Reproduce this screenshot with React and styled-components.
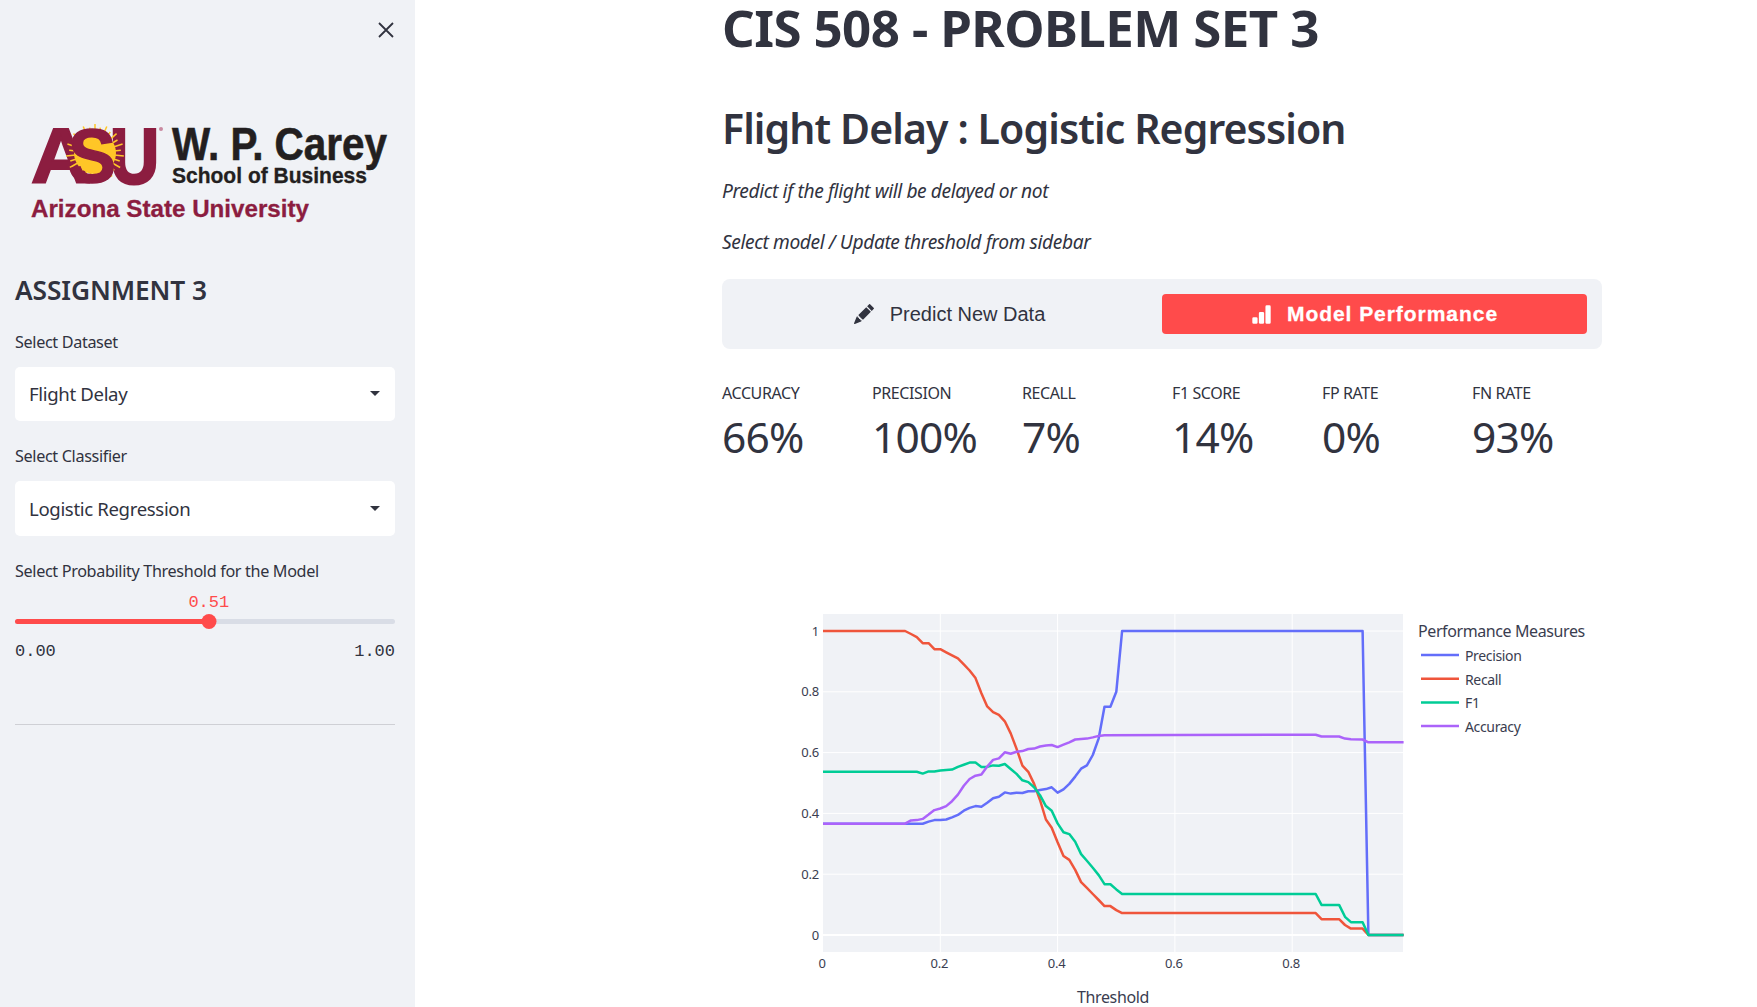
import React from "react";
import styled, { createGlobalStyle } from "styled-components";
import { BsPencilFill, BsBarChartFill } from "react-icons/bs";

const SANS = `"Noto Sans", "Open Sans", sans-serif`;
const INK = "#31333f";

const Global = createGlobalStyle`
  html, body { margin: 0; padding: 0; background: #fff; }
  body { font-family: ${SANS}; color: ${INK}; overflow: hidden; }
`;

const Page = styled.div`display: flex; width: 1757px; height: 1007px; overflow: hidden;`;
const Sidebar = styled.aside`
  position: relative; flex: 0 0 415px; min-width: 0; box-sizing: border-box; height: 1007px;
  padding: 120px 20px 0 15px; background: #f0f2f6;
`;
const CloseBtn = styled.svg`position: absolute; top: 22px; left: 378px; width: 16px; height: 16px;`;
const LogoSvg = styled.svg`display: block; width: 400px; height: 105px; margin-right: -20px;`;
const SideTitle = styled.h2`
  margin: 48px 0 0; font-size: 26.3px; line-height: 34px; font-weight: 600; letter-spacing: -0.1px; color: ${INK};
`;
const FieldLabel = styled.div`
  margin-top: 24.5px; font-size: 16.2px; line-height: 20px; letter-spacing: -0.35px; color: ${INK}; white-space: nowrap;
`;
const SelectBox = styled.div`
  display: flex; align-items: center; justify-content: space-between; box-sizing: border-box;
  margin-top: 15.5px; height: ${p => p.$h}px; padding: 0 15px ${p => p.$lift}px 14px; background: #fff; border-radius: 5px;
  font-size: 18.6px; letter-spacing: -0.35px; color: ${INK};
`;
const Caret = styled.span`
  width: 0; height: 0; border-left: 5px solid transparent; border-right: 5px solid transparent;
  border-top: 5.5px solid ${INK};
`;
const Slider = styled.div`position: relative; margin-top: 38.5px; height: 5px; border-radius: 3px; background: #d9dde6;`;
const SliderFill = styled.div`height: 100%; border-radius: 3px; background: #ff4b4b;`;
const SliderThumb = styled.div`
  position: absolute; top: -5px; width: 15px; height: 15px; border-radius: 50%; background: #ff4b4b; transform: translateX(-50%);
`;
const SliderValue = styled.div`
  position: absolute; top: -26px; transform: translateX(-50%); font: 17px/20px "Liberation Mono", monospace; color: #ff4b4b;
`;
const SliderRange = styled.div`
  display: flex; justify-content: space-between; margin-top: 18px;
  font: 17px/20px "Liberation Mono", monospace; color: ${INK};
`;
const Rule = styled.hr`margin: 62px 0 0; border: 0; height: 1px; background: #cfd0d5;`;

const Main = styled.main`flex: 1; padding-left: 307px;`;
const Column = styled.div`width: 880px;`;
const Title = styled.h1`
  margin: 0; font-size: 51px; line-height: 54px; font-weight: 700; letter-spacing: -0.6px; color: ${INK}; white-space: nowrap;
`;
const SubTitle = styled.h2`
  margin: 49px 0 0; font-size: 41px; line-height: 50px; font-weight: 600; letter-spacing: -0.9px; color: ${INK}; white-space: nowrap;
`;
const Note = styled.p`
  margin: ${p => p.$top}px 0 0; font-size: 19.2px; line-height: 26px; font-style: italic; letter-spacing: -0.4px; color: ${INK};
`;
const Menu = styled.nav`
  display: grid; grid-template-columns: 425px 425px; box-sizing: border-box;
  height: 70px; margin-top: 24px; padding: 15px; border-radius: 8px; background: #f0f2f6;
`;
const MenuItem = styled.div`
  display: flex; align-items: center; justify-content: center; gap: ${p => (p.$active ? 15 : 16)}px;
  border-radius: 4px; font-family: "Liberation Sans", Arial, sans-serif; font-size: ${p => (p.$active ? 21 : 20)}px;
  font-weight: ${p => (p.$active ? 700 : 400)}; color: ${p => (p.$active ? "#fff" : INK)};
  background: ${p => (p.$active ? "#ff4b4b" : "transparent")};
  letter-spacing: ${p => (p.$active ? "0.95px" : "0")};
  -webkit-text-stroke: ${p => (p.$active ? "0.3px #fff" : "0")};
`;
const Metrics = styled.div`display: grid; grid-template-columns: repeat(6, 130px); column-gap: 20px; margin-top: 34px;`;
const Metric = styled.div``;
const MetricLabel = styled.div`font-size: 16px; line-height: 20px; letter-spacing: -0.4px; color: ${INK};`;
const MetricValue = styled.div`margin-top: 9px; font-size: 42.5px; line-height: 50px; letter-spacing: -0.8px; color: ${INK};`;
const ChartSvg = styled.svg`display: block; width: 880px; height: 407px; margin-top: 138px;`;
const Tick = styled.text`font-family: ${SANS}; font-size: 13px; letter-spacing: -0.2px; fill: #3a3d50;`;
const LegendItem = styled.text`font-family: ${SANS}; font-size: 14px; letter-spacing: -0.35px; fill: #3a3d50;`;
const LegendTitle = styled.text`font-family: ${SANS}; font-size: 16px; letter-spacing: -0.4px; fill: #3a3d50;`;
const AxisTitle = styled.text`font-family: ${SANS}; font-size: 16px; letter-spacing: -0.35px; fill: #3a3d50;`;

const PRECISION = [[0,.366],[.17,.366],[.18,.373],[.19,.378],[.2,.378],[.21,.38],[.22,.387],[.23,.395],[.24,.409],[.25,.418],[.26,.424],[.27,.422],[.28,.435],[.29,.45],[.3,.455],[.31,.469],[.32,.465],[.33,.468],[.34,.467],[.35,.473],[.36,.473],[.37,.477],[.38,.48],[.39,.486],[.4,.468],[.41,.479],[.42,.497],[.43,.521],[.44,.547],[.45,.558],[.46,.592],[.47,.647],[.48,.751],[.49,.751],[.5,.8],[.51,1],[.92,1],[.93,0],[.99,0]];
const RECALL = [[0,1],[.14,1],[.15,.99],[.16,.98],[.17,.96],[.18,.96],[.19,.94],[.2,.94],[.21,.93],[.22,.92],[.23,.91],[.24,.89],[.25,.87],[.26,.845],[.27,.795],[.28,.752],[.29,.733],[.3,.724],[.31,.703],[.32,.663],[.33,.613],[.34,.557],[.35,.537],[.36,.497],[.37,.444],[.38,.38],[.39,.353],[.4,.305],[.41,.26],[.42,.247],[.43,.214],[.44,.174],[.45,.155],[.46,.135],[.47,.115],[.48,.095],[.49,.095],[.5,.082],[.51,.072],[.84,.072],[.85,.052],[.88,.052],[.89,.033],[.9,.021],[.92,.021],[.93,0],[.99,0]];
const F1 = [[0,.537],[.16,.537],[.17,.531],[.18,.538],[.19,.538],[.2,.541],[.21,.543],[.22,.544],[.23,.553],[.24,.56],[.25,.567],[.26,.567],[.27,.553],[.28,.553],[.29,.558],[.3,.557],[.31,.5625],[.32,.546],[.33,.53],[.34,.509],[.35,.503],[.36,.486],[.37,.46],[.38,.424],[.39,.409],[.4,.367],[.41,.338],[.42,.332],[.43,.307],[.44,.266],[.45,.244],[.46,.221],[.47,.197],[.48,.167],[.49,.167],[.5,.15],[.51,.135],[.84,.135],[.85,.099],[.88,.099],[.89,.06],[.9,.042],[.92,.042],[.93,0],[.99,0]];
const ACCURACY = [[0,.366],[.14,.366],[.15,.377],[.16,.378],[.17,.382],[.18,.396],[.19,.411],[.2,.416],[.21,.424],[.22,.44],[.23,.462],[.24,.491],[.25,.513],[.26,.524],[.27,.528],[.28,.554],[.29,.576],[.3,.581],[.31,.601],[.32,.596],[.33,.603],[.34,.605],[.35,.612],[.36,.613],[.37,.62],[.38,.623],[.39,.625],[.4,.618],[.41,.626],[.42,.634],[.43,.643],[.44,.645],[.45,.646],[.46,.65],[.47,.655],[.48,.657],[.6,.658],[.84,.659],[.85,.653],[.88,.653],[.89,.646],[.9,.644],[.92,.643],[.93,.634],[.99,.634]];

const X0 = 101, PX = 586.5, Y0 = 335, PY = 304;
const sx = (t) => X0 + PX * t;
const sy = (v) => Y0 - PY * v;
const toPoints = (keys) => keys.map(([t, v]) => `${sx(t).toFixed(1)},${sy(v).toFixed(1)}`).join(" ");

const SERIES = [
  { name: "Precision", color: "#636efa", keys: PRECISION },
  { name: "Recall", color: "#ef553b", keys: RECALL },
  { name: "F1", color: "#00cc96", keys: F1 },
  { name: "Accuracy", color: "#ab63fa", keys: ACCURACY },
];
const METRICS = [["ACCURACY","66%"],["PRECISION","100%"],["RECALL","7%"],["F1 SCORE","14%"],["FP RATE","0%"],["FN RATE","93%"]];

function Chart() {
  return (
    <ChartSvg viewBox="0 0 880 407">
      <rect x="101" y="14" width="580" height="338" fill="#f0f2f6" />
      {[.2,.4,.6,.8].map((t) => <line key={t} x1={sx(t)} x2={sx(t)} y1="14" y2="352" stroke="#fff" strokeWidth="1" />)}
      {[0,.2,.4,.6,.8,1].map((v) => <line key={v} x1="101" x2="681" y1={sy(v)} y2={sy(v)} stroke="#fff" strokeWidth={v === 0 ? 2 : 1} />)}
      {SERIES.map((s) => <polyline key={s.name} points={toPoints(s.keys)} fill="none" stroke={s.color} strokeWidth="2.5" strokeLinejoin="round" />)}
      {[0,.2,.4,.6,.8,1].map((v) => <Tick key={v} x="97" y={sy(v) + 4.5} textAnchor="end">{v}</Tick>)}
      {[0,.2,.4,.6,.8].map((t) => <Tick key={t} x={sx(t) - 1} y="367.5" textAnchor="middle">{t}</Tick>)}
      <AxisTitle x="391" y="403" textAnchor="middle">Threshold</AxisTitle>
      <LegendTitle x="696" y="36.5">Performance Measures</LegendTitle>
      {SERIES.map((s, i) => (
        <g key={s.name}>
          <line x1="699" x2="737" y1={55 + i * 23.7} y2={55 + i * 23.7} stroke={s.color} strokeWidth="2.5" />
          <LegendItem x="743" y={61 + i * 23.7}>{s.name}</LegendItem>
        </g>
      ))}
    </ChartSvg>
  );
}

function Logo() {
  const rays = Array.from({ length: 30 }, (_, i) => (i * 360) / 30);
  const MAROON = "#8c1d40";
  return (
    <LogoSvg viewBox="0 120 400 105">
      <text x="16" y="183" fontFamily="Liberation Sans" fontWeight="700" fontSize="78" textLength="60" lengthAdjust="spacingAndGlyphs" fill={MAROON} stroke={MAROON} strokeWidth="2">A</text>
      <text x="95" y="183" fontFamily="Liberation Sans" fontWeight="700" fontSize="78" textLength="49" lengthAdjust="spacingAndGlyphs" fill={MAROON} stroke={MAROON} strokeWidth="3">U</text>
      <g stroke="#ffc627" strokeWidth="1.5">
        {rays.map((a) => <line key={a} x1="80" y1="153" x2="80" y2={a % 24 < 12 ? 124 : 127} transform={`rotate(${a} 80 153)`} />)}
      </g>
      <circle cx="80" cy="153" r="21" fill="#ffc627" />
      <text x="53" y="182" fontFamily="Liberation Sans" fontWeight="700" fontSize="76" textLength="48" lengthAdjust="spacingAndGlyphs" fill={MAROON} stroke={MAROON} strokeWidth="1.5">S</text>
      <circle cx="146" cy="129" r="2" fill="#c98aa0" />
      <text x="157" y="160" fontFamily="Liberation Sans" fontWeight="700" fontSize="46" textLength="215" lengthAdjust="spacingAndGlyphs" fill="#231f20" stroke="#231f20" strokeWidth="0.6">W. P. Carey</text>
      <text x="157" y="183" fontFamily="Liberation Sans" fontWeight="700" fontSize="22" textLength="195" lengthAdjust="spacingAndGlyphs" fill="#231f20" stroke="#231f20" strokeWidth="0.3">School of Business</text>
      <text x="16" y="217" fontFamily="Liberation Sans" fontWeight="700" fontSize="24" textLength="278" lengthAdjust="spacingAndGlyphs" fill={MAROON} stroke={MAROON} strokeWidth="0.3">Arizona State University</text>
    </LogoSvg>
  );
}

export default function App() {
  return (
    <Page>
      <Global />
      <Sidebar>
        <CloseBtn viewBox="0 0 16 16"><path d="M1 1 L15 15 M15 1 L1 15" stroke={INK} strokeWidth="1.8" fill="none" /></CloseBtn>
        <Logo />
        <SideTitle>ASSIGNMENT 3</SideTitle>
        <FieldLabel>Select Dataset</FieldLabel>
        <SelectBox $h={54} $lift={2}>Flight Delay<Caret /></SelectBox>
        <FieldLabel>Select Classifier</FieldLabel>
        <SelectBox $h={55} $lift={0}>Logistic Regression<Caret /></SelectBox>
        <FieldLabel>Select Probability Threshold for the Model</FieldLabel>
        <Slider>
          <SliderFill style={{ width: "51%" }} />
          <SliderThumb style={{ left: "51%" }} />
          <SliderValue style={{ left: "51%" }}>0.51</SliderValue>
        </Slider>
        <SliderRange><span>0.00</span><span>1.00</span></SliderRange>
        <Rule />
      </Sidebar>
      <Main>
        <Column>
          <Title>CIS 508 - PROBLEM SET 3</Title>
          <SubTitle>Flight Delay : Logistic Regression</SubTitle>
          <Note $top={25}>Predict if the flight will be delayed or not</Note>
          <Note $top={25}>Select model / Update threshold from sidebar</Note>
          <Menu>
            <MenuItem><BsPencilFill size={20} />Predict New Data</MenuItem>
            <MenuItem $active><BsBarChartFill size={21} />Model Performance</MenuItem>
          </Menu>
          <Metrics>
            {METRICS.map(([l, v]) => (
              <Metric key={l}><MetricLabel>{l}</MetricLabel><MetricValue>{v}</MetricValue></Metric>
            ))}
          </Metrics>
          <Chart />
        </Column>
      </Main>
    </Page>
  );
}
